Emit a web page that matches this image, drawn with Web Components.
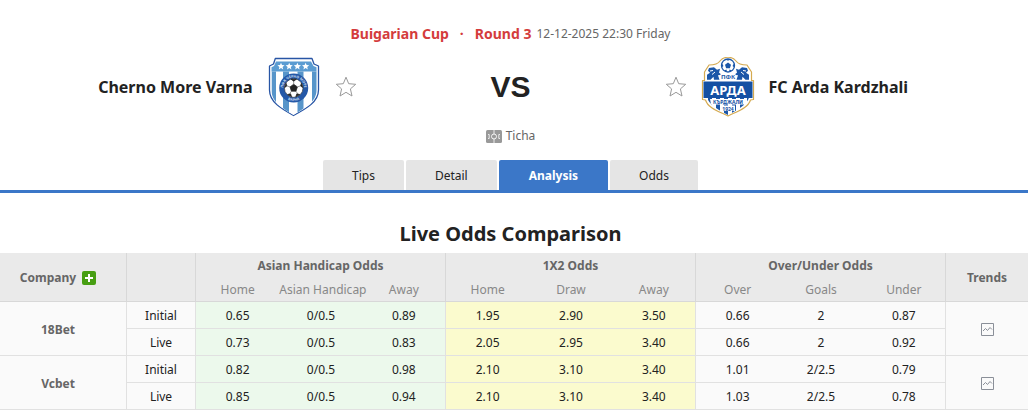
<!DOCTYPE html>
<html lang="en">
<head>
<meta charset="utf-8">
<title>Cherno More Varna VS FC Arda Kardzhali</title>
<style>
  body {
    margin: 0;
    background: #fff;
    color: #222;
    font: 12px/18px "Noto Sans", "Open Sans", sans-serif;
  }
</style>
</head>
<body>
<match-header>
  <span slot="league">Buigarian Cup</span>
  <span slot="round">Round 3</span>
  <span slot="date">12-12-2025 22:30 Friday</span>
  <match-team slot="home" side="home">Cherno More Varna<crest-varna slot="crest"></crest-varna></match-team>
  <match-team slot="away" side="away">FC Arda Kardzhali<crest-arda slot="crest"></crest-arda></match-team>
  <span slot="venue">Ticha</span>
</match-header>
<tab-bar>
  <tab-item href="#tips">Tips</tab-item>
  <tab-item href="#detail">Detail</tab-item>
  <tab-item href="#analysis" active>Analysis</tab-item>
  <tab-item href="#odds">Odds</tab-item>
</tab-bar>
<odds-comparison>Live Odds Comparison</odds-comparison>

<script>
class BaseElement extends HTMLElement {
    connectedCallback() {
        if (this.shadowRoot) {
            return;
        }
        const shadowRoot = this.attachShadow({mode: "open"});
        shadowRoot.innerHTML = this._render();
    }
}

class MatchHeader extends BaseElement {
    _render() {
        return `
          <style>
            :host {
              display: block;
              padding: 25px 7px 15px 0;
            }
            .info, .venue {
              display: flex;
              justify-content: center;
              align-items: center;
            }
            .info {
              gap: 5px;
              color: #666;
            }
            .cup {
              display: flex;
              gap: 11px;
              color: #d43c3c;
              font-size: 14px;
              font-weight: bold;
            }
            .teams {
              display: grid;
              grid-template-columns: 1fr 308px 1fr;
              align-items: center;
              margin: 14px 0 10px;
            }
            .vs {
              text-align: center;
              font: bold 30px/36px "Liberation Sans", Arial, sans-serif;
            }
            .venue {
              gap: 4px;
              color: #666;
            }
            svg {
              display: block;
            }
          </style>
          <div class="info">
            <div class="cup"><slot name="league"></slot><span>·</span><slot name="round"></slot></div>
            <slot name="date"></slot>
          </div>
          <div class="teams">
            <slot name="home"></slot>
            <div class="vs">VS</div>
            <slot name="away"></slot>
          </div>
          <div class="venue">
            <svg width="16" height="13" viewBox="0 0 16 13" fill="none" stroke="#fff" aria-hidden="true">
              <rect width="16" height="13" rx="1.5" fill="#999" stroke="none"/>
              <circle cx="8" cy="6.500" r="2.500" stroke-width=".9"/>
              <path d="M8 0v4M8 9v4" stroke-width=".8"/>
              <path d="M2 4.500h1.200v4H2M14 4.500h-1.200v4H14" stroke-width=".8"/>
            </svg>
            <slot name="venue"></slot>
          </div>`;
    }
}

class MatchTeam extends BaseElement {
    _render() {
        return `
          <style>
            :host {
              display: flex;
              align-items: center;
              justify-content: flex-end;
              gap: 14px;
              font-size: 16px;
              font-weight: bold;
              line-height: 24px;
            }
            :host([side="away"]) {
              flex-direction: row-reverse;
            }
            button {
              padding: 0;
              border: 0;
              background: none;
              cursor: pointer;
            }
            svg {
              display: block;
            }
          </style>
          <span><slot></slot></span>
          <slot name="crest"></slot>
          <button type="button" aria-label="Follow team">
            <svg width="22" height="22" viewBox="0 0 22 22" fill="#fff" stroke="#999" stroke-linejoin="round">
              <path d="M11 1.200l2.700 6.500 7 .6-5.300 4.600 1.600 7.100-6-3.700-6 3.700 1.600-7.100L1.300 8.300l7-.6z"/>
            </svg>
          </button>`;
    }
}

class CrestVarna extends BaseElement {
    _render() {
        return `
          <style>
            :host { display: block; }
            svg { display: block; font-family: "Noto Sans", sans-serif; font-weight: bold; }
          </style>
          <svg width="54" height="60" viewBox="0 0 54 60" role="img" aria-label="Cherno More Varna crest">
            <defs>
              <clipPath id="shield"><path d="M9 4.500H44L46.500 9l3 1.200V33c0 12-11 17.500-23 25C14.500 50.500 4.500 45 4.500 33V10.200L7 9z"/></clipPath>
              <path id="top" d="M16.700 34.600A10.600 10.600 0 1 1 36.700 34.600"/>
              <path id="bottom" d="M13.700 31a13 13 0 0 0 26 0"/>
            </defs>
            <path d="M8.300 1.500H45l2 5.500 4.500 2V33c0 12-12 18.500-25 25.500C14 51.500 2.500 45 2.500 33V9L6.500 7z" fill="#fff" stroke="#2855a5" stroke-width="1.300" stroke-linejoin="round"/>
            <g clip-path="url(#shield)">
              <rect width="54" height="60" fill="#fff"/>
              <path d="M4 0h46v14.500H4z" fill="#5b9cd2"/>
              <path d="M4.500 14.500h4.500V60H4.500zM16 14.500h6V60h-6zM30.500 14.500h6V60h-6zM45 14.500h5V60h-5z" fill="#5795ca"/>
            </g>
            <g fill="#fff">
              <path id="star" d="M14 5.700l1 2.400 2.600.2-2 1.700.6 2.500-2.200-1.400-2.200 1.400.6-2.500-2-1.700 2.600-.2z"/>
              <use href="#star" x="8.200"/><use href="#star" x="16.400"/><use href="#star" x="24.600"/>
            </g>
            <circle cx="26.700" cy="31" r="14.500" fill="#2458a7"/>
            <g fill="#c4d8ee" font-size="3.500" text-anchor="middle">
              <text><textPath href="#top" startOffset="50%">ПФК ЧЕРНО МОРЕ</textPath></text>
              <text><textPath href="#bottom" startOffset="50%">ВАРНА</textPath></text>
            </g>
            <circle cx="26.700" cy="31" r="9.300" fill="#fff" stroke="#333" stroke-width=".6"/>
            <path d="M26.700 27.200l3.700 2.700-1.400 4.300h-4.600L23 29.900zM24 22.200h5.400l-2.700 2zM34.400 26.300l1.300 4.200-2.200-1.600zM32.800 37.500l-4 2.300 1-3zM20.600 37.500l4 2.300-1-3zM19 26.300l-1.300 4.200 2.200-1.600z" fill="#222" stroke="#222" stroke-width=".7"/>
            <path d="M26.700 27v-3M30.400 29.900l3.100-1M29 34.200l1.700 2.600M24.400 34.200l-1.700 2.600M23 29.900l-3.100-1" stroke="#555" stroke-width=".6"/>
          </svg>`;
    }
}

class CrestArda extends BaseElement {
    _render() {
        return `
          <style>
            :host { display: block; }
            svg { display: block; font-family: "Noto Sans", sans-serif; font-weight: bold; }
          </style>
          <svg width="54" height="60" viewBox="0 0 54 60" role="img" aria-label="FC Arda Kardzhali crest">
            <defs>
              <clipPath id="body"><path d="M9 10c5 0 9-1.500 11-5 4-4 10-4 14 0 2 3.500 6 5 11 5l4 6v19c0 11-9 16-22 23C14 51 5 46 5 35V16z"/></clipPath>
            </defs>
            <path d="M8 8c5 0 9-1 11-4 4-5 12-5 16 0 2 3 6 4 11 4l4.500 7v8.500h2v19l-3 .5C47 51 37 54 27 59 17 54 7 51 4.500 43l-3-.5v-19h2V15z" fill="#fff" stroke="#d5aa50" stroke-width="1.200" stroke-linejoin="round"/>
            <g clip-path="url(#body)">
              <rect width="54" height="60" fill="#fff"/>
              <path d="M7 40h4v18H7zM15 40h4v18h-4zM23 40h4v18h-4zM31 40h4v18h-4zM39 40h4v18h-4zM46 40h3v18h-3z" fill="#1c57a8"/>
            </g>
            <g fill="#1c57a8">
              <path d="M8 11l5-.8 3 2.500 3-1-1 4 3 2-4 .5 1.500 4.500H13l-.5-3-3 3H6v-5l3-2-2-2zM46 11l-5-.8-3 2.500-3-1 1 4-3 2 4 .5-1.500 4.500H41l.5-3 3 3H48v-5l-3-2 2-2z"/>
              <path d="M9 14l3-.5M14 15l-3 2.500M45 14l-3-.5M40 15l3 2.500" stroke="#fff" stroke-width="1"/>
            </g>
            <circle cx="27" cy="8.500" r="6.500" fill="#fff" stroke="#1c57a8" stroke-width="1.300"/>
            <path d="M27 5.500l3 2.200-1.100 3.500h-3.800L24 7.700zM24.500 2.200h5L27 3.700zM33 6.500l.5 4-2-1.500zM21 6.500l-.5 4 2-1.500zM31 13.500l-3 1.500.5-2.500zM23 13.500l3 1.500-.5-2.500z" fill="#1c57a8"/>
            <path d="M19.500 16.300h15v7h-15z" fill="#fff"/>
            <text x="27" y="21.500" font-size="6" text-anchor="middle" fill="#1c57a8">ПФК</text>
            <path d="M2.500 24.500h49v16.500h-49z" fill="#1450a3"/>
            <text x="27" y="37.500" font-size="13" text-anchor="middle" fill="#fff">АРДА</text>
            <path d="M9 42h36l-1 5.500H10z" fill="#fff"/>
            <text x="27" y="46.500" font-size="5" text-anchor="middle" fill="#1450a3">КЪРДЖАЛИ</text>
            <path d="M20 48.500h14v5.500H20z" fill="#fff"/>
            <text x="27" y="53.500" font-size="5" text-anchor="middle" fill="#1450a3">1924</text>
          </svg>`;
    }
}

class TabBar extends BaseElement {
    _render() {
        return `
          <style>
            :host {
              display: block;
              padding-right: 7px;
              border-bottom: 3px solid #3b77c8;
            }
            nav {
              display: flex;
              justify-content: center;
              gap: 2px;
            }
          </style>
          <nav><slot></slot></nav>`;
    }
}

class TabItem extends BaseElement {
    _render() {
        return `
          <style>
            :host {
              display: block;
            }
            a {
              display: block;
              padding: 2px 29px 0;
              border-radius: 2px 2px 0 0;
              background: #e5e5e5;
              color: #222;
              line-height: 28px;
              text-decoration: none;
            }
            a:hover {
              background: #ddd;
            }
            :host([active]) a {
              padding: 2px 30px 0;
              background: #3b77c8;
              color: #fff;
              font-weight: bold;
            }
          </style>
          <a href="${this.getAttribute("href")}"><slot></slot></a>`;
    }
}

const companies = [
    {
        name: "18Bet",
        initial: ["0.65", "0/0.5", "0.89", "1.95", "2.90", "3.50", "0.66", "2", "0.87"],
        live: ["0.73", "0/0.5", "0.83", "2.05", "2.95", "3.40", "0.66", "2", "0.92"]
    },
    {
        name: "Vcbet",
        initial: ["0.82", "0/0.5", "0.98", "2.10", "3.10", "3.40", "1.01", "2/2.5", "0.79"],
        live: ["0.85", "0/0.5", "0.94", "2.10", "3.10", "3.40", "1.03", "2/2.5", "0.78"]
    }
];

class OddsComparison extends BaseElement {
    _cells(values) {
        const groups = ["asian", "x12", "total"];
        return values.map((value, i) => {
            const end = i % 3 === 2 ? " end" : "";
            return `<td class="${groups[Math.floor(i / 3)]}${end}">${value}</td>`;
        }).join("");
    }

    _company(item) {
        return `
          <tbody>
            <tr>
              <th class="name end" rowspan="2" scope="rowgroup">${item.name}</th>
              <td class="end">Initial</td>
              ${this._cells(item.initial)}
              <td rowspan="2">
                <a href="#trends" aria-label="${item.name} trends">
                  <svg width="13" height="13" viewBox="0 0 13 13" fill="none" stroke="#8a8f98">
                    <path d="M.5.5h12v12H.5z"/>
                    <path d="M2 8l2.500-2.500 2 2 2.500-3 2 2"/>
                  </svg>
                </a>
              </td>
            </tr>
            <tr>
              <td class="end">Live</td>
              ${this._cells(item.live)}
            </tr>
          </tbody>`;
    }

    _render() {
        return `
          <style>
            :host {
              display: block;
            }
            h2 {
              margin: 0;
              padding: 25px 7px 4px 0;
              font-size: 20px;
              line-height: 31px;
              text-align: center;
            }
            table {
              width: 100%;
              table-layout: fixed;
              border-spacing: 0;
              text-align: center;
            }
            .company { width: 127px; }
            .type { width: 69px; }
            .trends { width: 82px; }
            th, td {
              box-sizing: border-box;
              height: 27px;
              padding: 2px 0 0;
              border-bottom: 1px solid #e1e1e1;
              white-space: nowrap;
            }
            th {
              color: #666;
            }
            thead th {
              height: 24px;
              background: #eaeaea;
              border-color: #d8d8d8;
            }
            thead .group {
              border-bottom: 0;
            }
            thead .sub {
              height: 25px;
              color: #888;
              font-weight: normal;
            }
            tbody {
              background: #fafafa;
            }
            .end {
              border-right: 1px solid #e1e1e1;
            }
            thead .end {
              border-right-color: #d8d8d8;
            }
            .name {
              padding-right: 10px;
            }
            .asian { background: #ecf9ec; }
            .x12 { background: #fbfbce; }
            .label {
              display: flex;
              align-items: center;
              justify-content: center;
              gap: 6px;
            }
            button {
              padding: 0;
              border: 0;
              background: none;
              cursor: pointer;
            }
            a {
              display: flex;
              justify-content: center;
            }
            svg {
              display: block;
            }
          </style>
          <h2><slot></slot></h2>
          <table>
            <colgroup>
              <col class="company"><col class="type">
              <col span="9">
              <col class="trends">
            </colgroup>
            <thead>
              <tr>
                <th class="name end" rowspan="2">
                  <div class="label">Company
                    <button type="button" aria-label="Add company">
                      <svg width="14" height="14" viewBox="0 0 14 14">
                        <rect width="14" height="14" rx="2" fill="#479e12"/>
                        <path d="M7 3v8M3 7h8" stroke="#fff" stroke-width="2"/>
                      </svg>
                    </button>
                  </div>
                </th>
                <th class="end" rowspan="2"></th>
                <th class="group end" colspan="3">Asian Handicap Odds</th>
                <th class="group end" colspan="3">1X2 Odds</th>
                <th class="group end" colspan="3">Over/Under Odds</th>
                <th rowspan="2">Trends</th>
              </tr>
              <tr>
                <th class="sub">Home</th><th class="sub">Asian Handicap</th><th class="sub end">Away</th>
                <th class="sub">Home</th><th class="sub">Draw</th><th class="sub end">Away</th>
                <th class="sub">Over</th><th class="sub">Goals</th><th class="sub end">Under</th>
              </tr>
            </thead>
            ${companies.map(item => this._company(item)).join("")}
          </table>`;
    }
}

customElements.define("match-header", MatchHeader);
customElements.define("match-team", MatchTeam);
customElements.define("crest-varna", CrestVarna);
customElements.define("crest-arda", CrestArda);
customElements.define("tab-bar", TabBar);
customElements.define("tab-item", TabItem);
customElements.define("odds-comparison", OddsComparison);
</script>
</body>
</html>
